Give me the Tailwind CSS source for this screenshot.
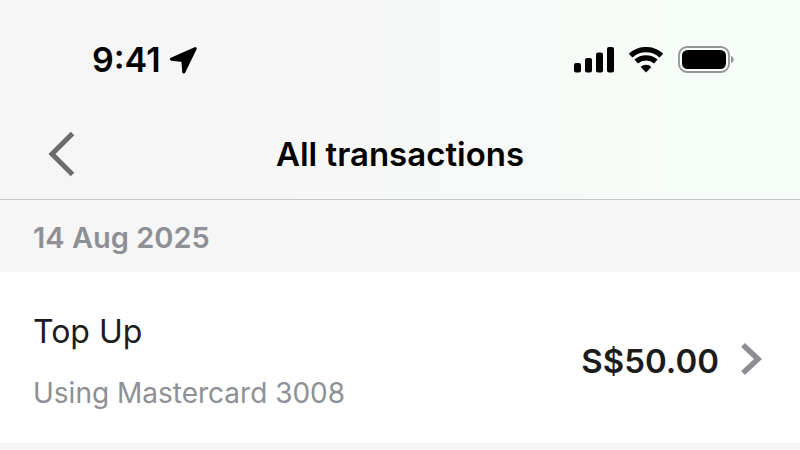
<!DOCTYPE html>
<html lang="en">
<head>
    <meta charset="UTF-8">
    <meta name="viewport" content="width=device-width, initial-scale=1.0">
    <title>All transactions</title>
    <script src="https://cdn.jsdelivr.net/npm/@tailwindcss/browser@4"></script>
</head>
<body class="min-h-screen bg-[#f6f6f6] font-['Inter',sans-serif]">

    <header class="border-b border-[#c5c8c7] bg-linear-to-r from-[#f6f6f6] from-30% to-[#f6fcf8] to-85%">
        <!-- Status bar -->
        <div class="flex items-center justify-between pt-9 pr-[66px] pl-[92px]">
            <div class="flex h-12 items-center gap-2 text-black">
                <span class="text-[34px] leading-12 font-semibold">9:41</span>
                <svg class="h-7 w-7" viewBox="0 0 28 28" fill="currentColor" stroke="currentColor" stroke-width="3" stroke-linejoin="round" aria-hidden="true"><path d="M26.200 2.500 2.500 13.200 13.800 14.600 14.800 26Z"/></svg>
            </div>
            <div class="flex h-12 items-center text-black">
                <svg class="h-[26px] w-10" viewBox="0 0 40 26" fill="currentColor" aria-hidden="true">
                    <rect x="0" y="16" width="7" height="9.500" rx="2"/>
                    <rect x="11" y="11" width="7" height="14.500" rx="2"/>
                    <rect x="22" y="5.500" width="7" height="20" rx="2"/>
                    <rect x="33" y="0" width="7" height="25.500" rx="2"/>
                </svg>
                <svg class="ml-3.5 h-[26px] w-9" viewBox="0 0 36 26" fill="none" stroke="currentColor" stroke-width="5.300" aria-hidden="true">
                    <path d="M2.600 8.600C11.400.600 24.600.600 33.400 8.600"/>
                    <path d="M8.200 14.600C13.800 9.600 22.200 9.600 27.800 14.600"/>
                    <path d="M12.700 20C15.600 17 20.400 17 23.300 20L18 25.600Z" fill="currentColor" stroke="none"/>
                </svg>
                <svg class="ml-3.5 h-7 w-14" viewBox="0 0 56 28" aria-hidden="true">
                    <rect x="1" y="1" width="50" height="25" rx="8" fill="none" stroke="#939694" stroke-width="1.800"/>
                    <rect x="4" y="4" width="44" height="19" rx="5.500" fill="#000"/>
                    <path d="M53 10c3.600 1 3.600 6 0 7z" fill="#939694"/>
                </svg>
            </div>
        </div>
        <!-- Title bar -->
        <div class="flex items-center justify-between px-12 pt-[46px] pb-[21px]">
            <button type="button" aria-label="Back" class="w-8 text-[#6c6c6c]">
                <svg class="h-12 w-8" viewBox="0 0 32 48" fill="none" stroke="currentColor" stroke-width="5" aria-hidden="true"><path d="M24.500 3.500 4 24 24.500 44.500"/></svg>
            </button>
            <h1 class="text-[33px] leading-12 font-semibold text-black">All transactions</h1>
            <div class="w-8"></div>
        </div>
    </header>

    <main>
        <h2 class="px-[33px] pt-[18px] pb-3.5 text-[29px] leading-10 font-semibold text-[#8e9095]">14 Aug 2025</h2>
        <a href="#" class="flex items-center justify-between bg-white px-[33px] pt-9 pb-[30px]">
            <div>
                <p class="text-[32px] leading-12 text-[#1c1c1c]">Top Up</p>
                <p class="mt-[17px] text-[28px] leading-10 text-[#8e9095]">Using Mastercard 3008</p>
            </div>
            <div class="flex items-center gap-5">
                <span class="text-[33px] leading-12 font-semibold text-[#1c1c1c]">S$50.00</span>
                <svg class="h-9 w-7" viewBox="0 0 28 36" fill="none" stroke="#8e8e92" stroke-width="5.500" aria-hidden="true"><path d="M4 2 19 16 4 30"/></svg>
            </div>
        </a>
    </main>

</body>
</html>
